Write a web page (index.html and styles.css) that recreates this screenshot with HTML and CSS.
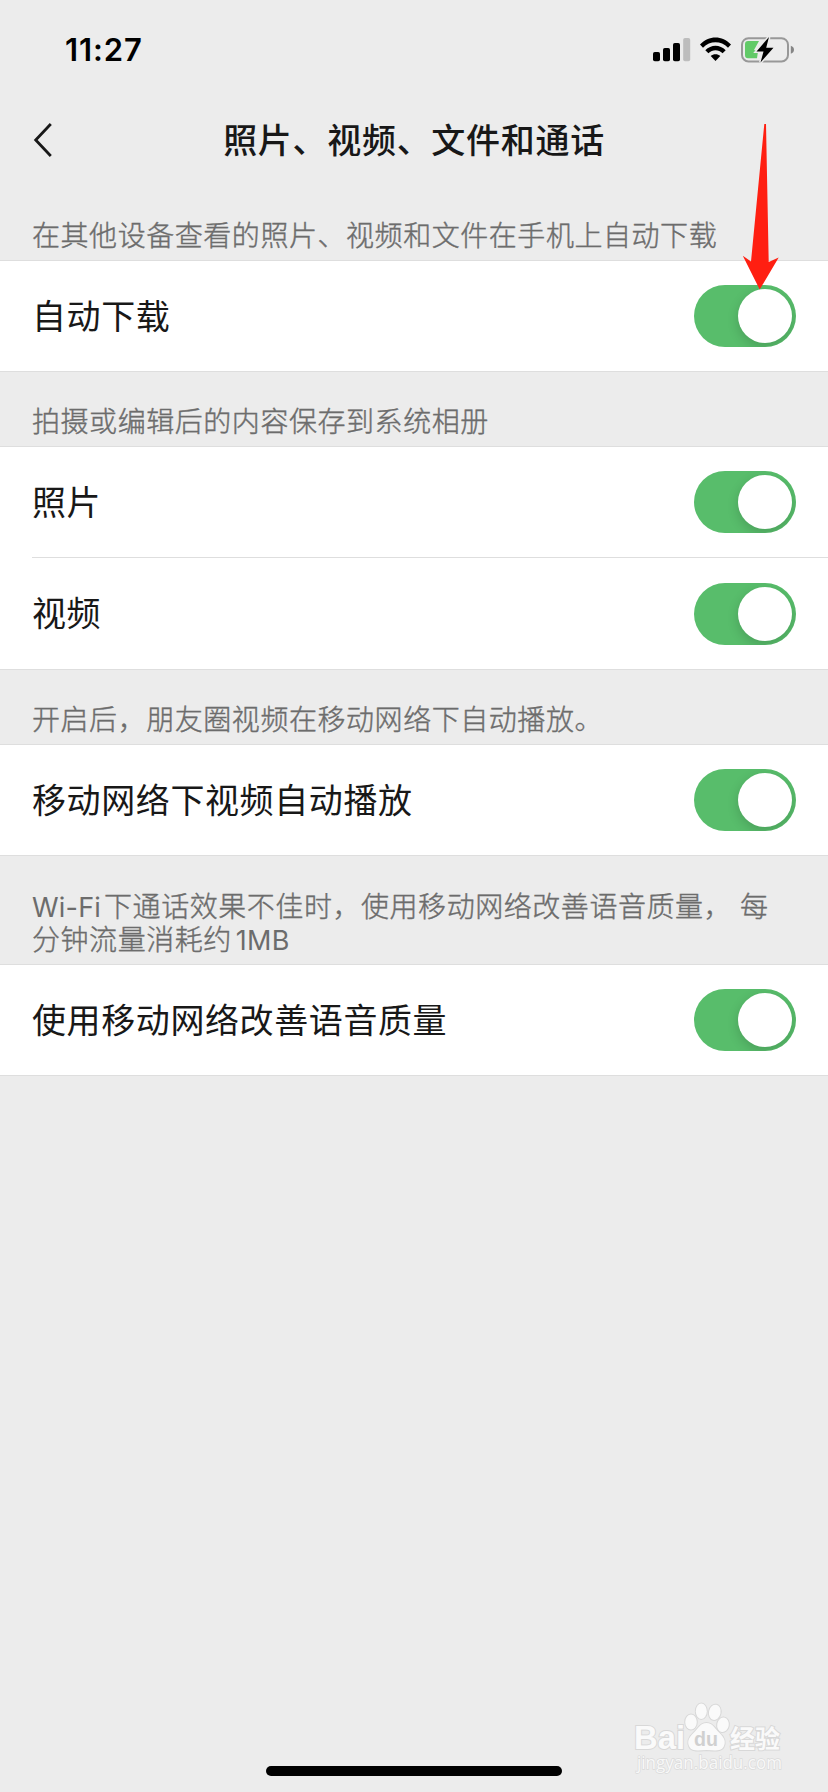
FILE: index.html
```html
<!DOCTYPE html>
<html lang="zh-CN">
<head>
<meta charset="utf-8">
<title>照片、视频、文件和通话</title>
<link rel="stylesheet" href="styles.css">
</head>
<body>
<div class="screen">
  <header class="status-bar">
    <span class="time">11:27</span>
    <svg class="status-icons" width="144" height="30" viewBox="652 35 144 30">
      <rect x="653" y="52" width="7" height="9.3" rx="1.8"/>
      <rect x="663" y="48" width="7" height="13.3" rx="1.8"/>
      <rect x="673" y="43" width="7" height="18.3" rx="1.8"/>
      <rect x="683.2" y="38" width="7" height="23.3" rx="1.8" fill="#bdbdbd"/>
      <path d="M700 44.6C708.500 35.200 722.500 35.200 731 44.600L728 47.700C721 40.400 710 40.400 703 47.700Z"/>
      <path d="M705.300 50.200C711 44.200 720 44.200 725.700 50.200L722.600 53.300C718.500 49.300 712.500 49.300 708.400 53.300Z"/>
      <path d="M710.700 56C713.400 53.500 717.600 53.500 720.300 56L715.500 61Z"/>
      <rect x="742" y="38.200" width="46" height="23.200" rx="6.500" fill="none" stroke="#989898" stroke-width="2"/>
      <path d="M790.800 45.800Q794 47 794 49.800Q794 52.600 790.800 53.800Z" fill="#858585"/>
      <path d="M748 41H759L754 50L758 51.500L757 58.300H748Q745 58.300 745 55V44.300Q745 41 748 41Z" fill="#62ca68"/>
      <path class="bolt" d="M769 37L756.500 51.400H763.500L760.500 62.500L773.500 47.700H766.200Z"/>
    </svg>
  </header>

  <nav class="nav-bar">
    <svg class="back" width="20" height="36" viewBox="0 0 20 36"><path d="M17.800 2L2.700 18L17.800 34"/></svg>
    <h1 class="title">照片、视频、文件和通话</h1>
  </nav>

  <main>
    <p class="caption first">在其他设备查看的照片、视频和文件在手机上自动下载</p>
    <section class="group">
      <div class="row"><span>自动下载</span><i class="switch"></i></div>
    </section>

    <p class="caption">拍摄或编辑后的内容保存到系统相册</p>
    <section class="group">
      <div class="row"><span>照片</span><i class="switch"></i></div>
      <div class="row"><span>视频</span><i class="switch"></i></div>
    </section>

    <p class="caption">开启后，朋友圈视频在移动网络下自动播放。</p>
    <section class="group">
      <div class="row"><span>移动网络下视频自动播放</span><i class="switch"></i></div>
    </section>

    <p class="caption tall"><span class="latin wifi">Wi-Fi</span>下通话效果不佳时，使用移动网络改善语音质量， 每<br>分钟流量消耗约<span class="latin size">1MB</span></p>
    <section class="group">
      <div class="row"><span>使用移动网络改善语音质量</span><i class="switch"></i></div>
    </section>
  </main>

  <svg class="arrow" width="40" height="170" viewBox="741 122 40 170">
    <path d="M764.300 124H766L768.700 262L778.700 257.500L759.700 289.500L742.800 255.800L751 261.500Z"/>
  </svg>

  <svg class="watermark" width="170" height="84" viewBox="625 1696 170 84">
    <g class="mark">
      <text class="brand" x="634" y="1749.300" textLength="51" lengthAdjust="spacingAndGlyphs">Bai</text>
      <ellipse cx="691" cy="1722" rx="5.800" ry="7.500"/>
      <ellipse cx="701.300" cy="1711.300" rx="5.500" ry="7.700"/>
      <ellipse cx="714.800" cy="1712.300" rx="5.800" ry="7.700" transform="rotate(12 714.800 1712.300)"/>
      <ellipse cx="723" cy="1724.800" rx="5.800" ry="7.300" transform="rotate(10 723 1724.800)"/>
      <path d="M706.500 1723C713 1723 715 1729 719 1732.500C725 1738 726 1742 723.500 1747C721 1751.500 715 1750.500 706.500 1750C698 1750.500 692 1751.500 689.500 1747C687 1742 688 1738 694 1732.500C698 1729 700 1723 706.500 1723Z"/>
      <text class="experience" x="730" y="1747.500" textLength="50">经验</text>
    </g>
    <text class="du" x="694" y="1746" textLength="24" lengthAdjust="spacingAndGlyphs">du</text>
    <text class="site" x="637" y="1769" textLength="145" lengthAdjust="spacingAndGlyphs">jingyan.baidu.com</text>
  </svg>

  <div class="home-indicator"></div>
</div>
</body>
</html>
```

FILE: styles.css
```css
* { box-sizing: border-box; }

body {
  margin: 0;
  background: #ececec;
  color: #181818;
  font-family: "Noto Sans CJK SC", sans-serif;
}

.screen {
  position: relative;
  display: flex;
  flex-direction: column;
  width: 828px;
  height: 1792px;
  overflow: hidden;
  background: #ececec;
}

.status-bar {
  display: flex;
  align-items: center;
  justify-content: space-between;
  height: 100px;
  padding: 0 32px 0 65px;
}

.time {
  color: #000;
  font: 600 31px/40px Inter, sans-serif;
  letter-spacing: 0.9px;
}

.bolt {
  stroke: #ececec;
  stroke-width: 3px;
  paint-order: stroke;
}

.nav-bar {
  display: grid;
  grid-template-columns: 60px 1fr 60px;
  align-items: center;
  height: 80px;
}

.back {
  margin-left: 33px;
  fill: none;
  stroke: #181818;
  stroke-width: 2.8px;
}

.title {
  margin: 0;
  padding-bottom: 2px;
  font-size: 34px;
  font-weight: 500;
  line-height: 48px;
  letter-spacing: 0.7px;
  text-align: center;
}

.caption {
  display: flow-root;
  height: 74px;
  margin: 0;
  padding: 32px 32px 0;
  color: #6c6c6c;
  font-size: 28px;
  font-weight: 300;
  line-height: 33px;
  letter-spacing: 0.55px;
  white-space: nowrap;
  -webkit-text-stroke: 0.4px #6c6c6c;
}

.caption.first {
  height: 80px;
  padding-top: 38px;
}

.caption.tall {
  height: 108px;
  padding-top: 33px;
  word-spacing: 1px;
}

.latin {
  font-family: Inter, sans-serif;
  font-weight: 400;
  font-size: 27px;
  line-height: 1;
  letter-spacing: 0.2px;
  -webkit-text-stroke: 0;
}

.wifi { margin-right: 3px; }
.size { margin-left: 4px; }

.group {
  border-top: 1px solid #dedede;
  border-bottom: 1px solid #dedede;
  background: #fff;
}

.row {
  display: flex;
  align-items: center;
  justify-content: space-between;
  height: 110px;
  margin-left: 32px;
  padding-right: 32px;
  font-size: 34px;
  line-height: 48px;
  letter-spacing: 0.6px;
}

.row > span { padding-bottom: 3px; }

.row + .row {
  height: 112px;
  border-top: 1px solid #dedede;
}

.switch {
  display: flex;
  justify-content: flex-end;
  width: 102px;
  height: 62px;
  padding: 4px;
  border-radius: 31px;
  overflow: hidden;
  background: #58bd6b;
}

.switch::before {
  content: "";
  width: 54px;
  height: 54px;
  border-radius: 50%;
  background: #fff;
  box-shadow: 0 4px 12px rgba(0, 0, 0, 0.16);
}

.arrow {
  position: absolute;
  left: 741px;
  top: 122px;
  fill: #ff1f11;
}

.watermark {
  position: absolute;
  left: 625px;
  top: 1696px;
}

.mark {
  fill: #fafafa;
  stroke: #d8d8d8;
  stroke-width: 2px;
  paint-order: stroke;
}

.brand { font: 700 33px "Liberation Sans", sans-serif; }
.experience { font: 700 25px "Noto Sans CJK SC", sans-serif; }

.du {
  fill: #d0d0d0;
  font: 700 21px "Liberation Sans", sans-serif;
}

.site {
  fill: #f8f8f8;
  stroke: #dadada;
  stroke-width: 1.5px;
  paint-order: stroke;
  font: 400 19px "Open Sans", sans-serif;
}

.home-indicator {
  width: 296px;
  height: 10px;
  margin: auto auto 16px;
  border-radius: 5px;
  background: #000;
}
```
